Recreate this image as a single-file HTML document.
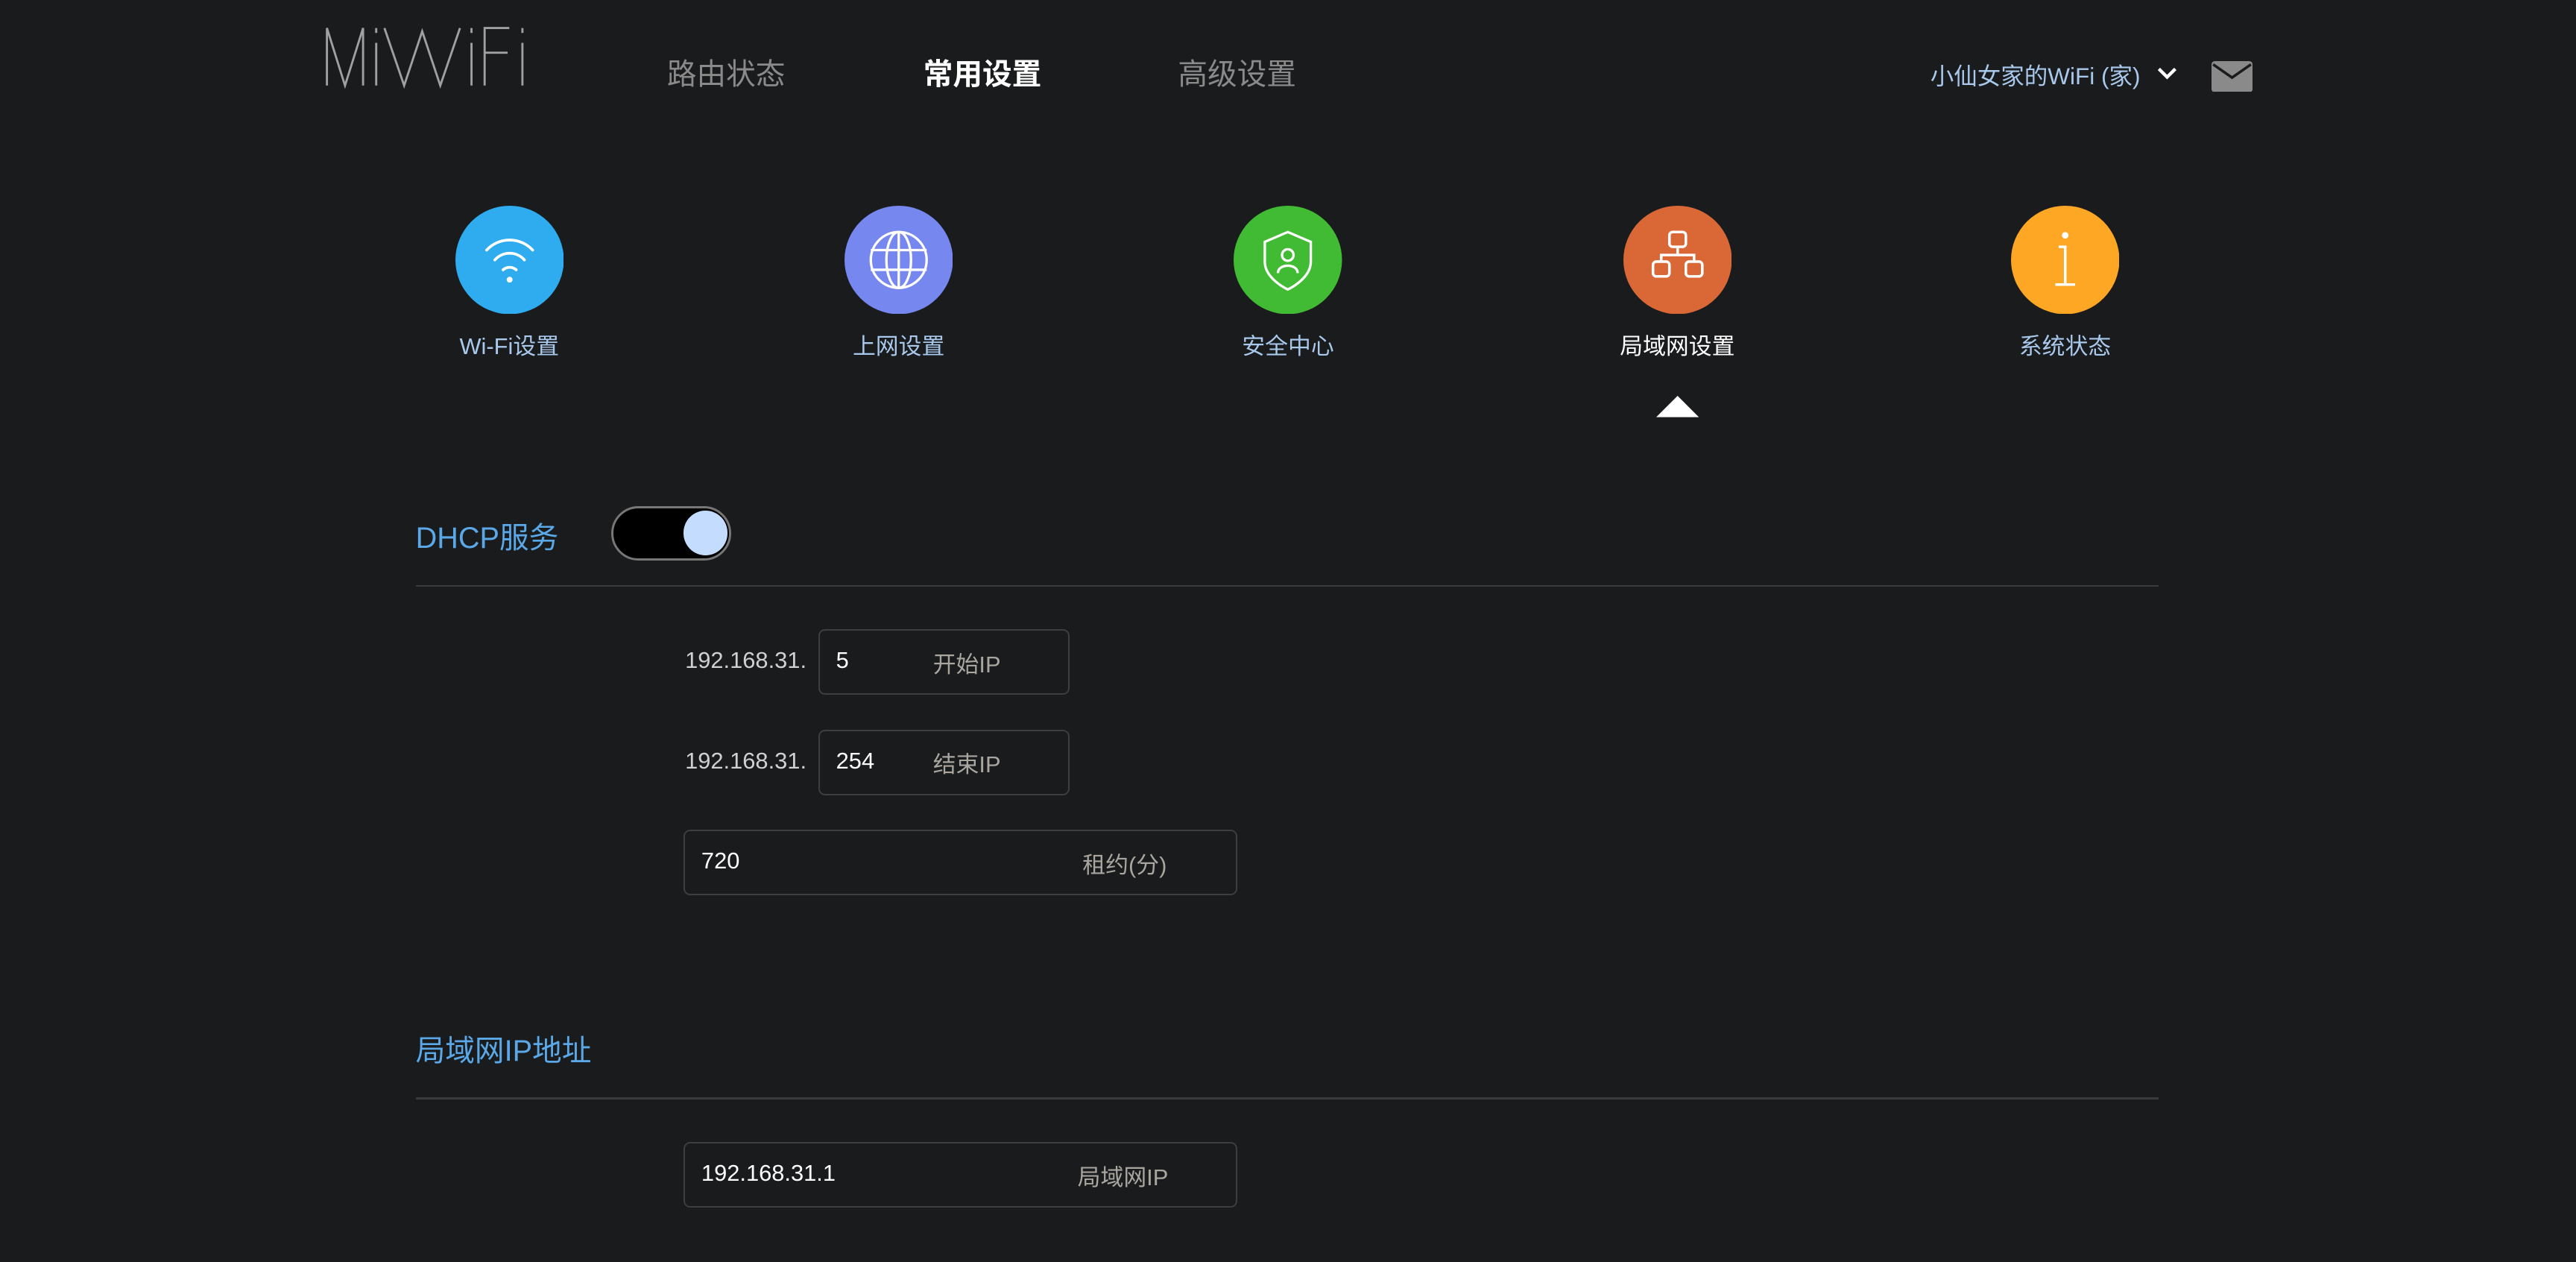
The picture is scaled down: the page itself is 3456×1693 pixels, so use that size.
<!DOCTYPE html>
<html><head><meta charset="utf-8"><style>
html,body{margin:0;padding:0;background:#1a1b1d;overflow:hidden;}
#w{position:relative;width:1568px;height:768px;zoom:2.20408;font-family:"Liberation Sans","Noto Sans CJK SC",sans-serif;}
.a{position:absolute;white-space:nowrap;}
.nav{font-size:18px;top:31px;color:#8a8a8a;}
.lbl{font-size:14px;top:199px;color:#a8c8ec;transform:translateX(-50%);}
.hr{position:absolute;left:253px;width:1061px;height:1px;background:#3a3b3d;}
.inp{position:absolute;border:1px solid #3c3e40;border-radius:4px;box-sizing:border-box;height:40px;}
.v{position:absolute;top:10px;font-size:14px;color:#fff;}
.p{position:absolute;top:9px;font-size:14px;color:#a9a6a0;}
.pre{font-size:14px;color:#d0d0d0;}
.sec{font-size:18px;color:#5aa8e8;}
</style></head><body><div id="w">
<svg class="a" style="left:196px;top:14px" width="130" height="40" viewBox="0 0 130 40" fill="none" stroke="#a0a0a0" stroke-width="1.3">
<polyline points="3,38 3,3 14,38 25,3 25,38"/>
<line x1="33" y1="3" x2="33" y2="6"/><line x1="33" y1="12" x2="33" y2="38"/>
<polyline points="38,3 50,38 61,5 72,38 84,3"/>
<line x1="91" y1="3" x2="91" y2="6"/><line x1="91" y1="12" x2="91" y2="38"/>
<polyline points="114,3 99,3 99,38"/><line x1="99" y1="18" x2="113" y2="18"/>
<line x1="122" y1="3" x2="122" y2="6"/><line x1="122" y1="12" x2="122" y2="38"/>
</svg>
<div class="a nav" style="left:406px">路由状态</div>
<div class="a nav" style="left:562px;color:#fff;font-weight:bold">常用设置</div>
<div class="a nav" style="left:717px">高级设置</div>
<div class="a" style="left:1175px;top:35px;font-size:14.3px;color:#a8c8ec">小仙女家的WiFi (家)</div>
<svg class="a" style="left:1312px;top:40px" width="14" height="10"><polyline points="2,2 7,7 12,2" fill="none" stroke="#fff" stroke-width="2"/></svg>
<svg class="a" style="left:1346px;top:37px" width="25" height="19"><rect x="0" y="0" width="25" height="19" rx="2" fill="#8a8a8a"/><polyline points="1,2 12.5,10 24,2" fill="none" stroke="#1a1b1d" stroke-width="1.6"/></svg>

<svg class="a" style="left:277px;top:125px" width="66" height="66" viewBox="-33 -33 66 66"><circle r="33" fill="#2fabef"/><g fill="none" stroke="#fff" stroke-width="1.7" stroke-linecap="round"><path d="M-14,-6 A19,19 0 0 1 14,-6"/><path d="M-9,0 A12,12 0 0 1 9,0"/><path d="M-4,6 A6,6 0 0 1 4,6"/></g><circle cx="0" cy="12" r="1.8" fill="#fff"/></svg>
<svg class="a" style="left:514px;top:125px" width="66" height="66" viewBox="-33 -33 66 66"><circle r="33" fill="#7787f0"/><g fill="none" stroke="#fff" stroke-width="1.5"><circle r="17"/><ellipse rx="7.5" ry="17"/><line x1="-17" y1="-6" x2="17" y2="-6"/><line x1="-17" y1="6" x2="17" y2="6"/><line x1="0" y1="-17" x2="0" y2="17"/></g></svg>
<svg class="a" style="left:751px;top:125px" width="66" height="66" viewBox="-33 -33 66 66"><circle r="33" fill="#41bb33"/><g fill="none" stroke="#fff" stroke-width="1.5"><path d="M0,-17 L14,-11 V1 C14,9 6,15 0,18 C-6,15 -14,9 -14,1 V-11 Z"/><circle cx="0" cy="-3" r="3.5"/><path d="M-6,8 C-6,2 6,2 6,8"/></g></svg>
<svg class="a" style="left:988px;top:125px" width="66" height="66" viewBox="-33 -33 66 66"><circle r="33" fill="#da6836"/><g fill="none" stroke="#fff" stroke-width="1.6"><rect x="-5" y="-17" width="10" height="9" rx="2"/><path d="M0,-8 V-3 M-10,1 V-3 H10 V1"/><rect x="-15" y="1" width="10" height="9" rx="2"/><rect x="5" y="1" width="10" height="9" rx="2"/></g></svg>
<svg class="a" style="left:1224px;top:125px" width="66" height="66" viewBox="-33 -33 66 66"><circle r="33" fill="#fda725"/><circle cx="0" cy="-15" r="2" fill="#fff"/><path d="M-4,-8 H0 V15 M-6,15 H6" fill="none" stroke="#fff" stroke-width="1.6"/></svg>

<div class="a lbl" style="left:310px">Wi-Fi设置</div>
<div class="a lbl" style="left:547px">上网设置</div>
<div class="a lbl" style="left:784px">安全中心</div>
<div class="a lbl" style="left:1021px;color:#fff">局域网设置</div>
<div class="a lbl" style="left:1257px">系统状态</div>
<svg class="a" style="left:1008px;top:241px" width="26" height="13"><polygon points="13,0 26,13 0,13" fill="#fff"/></svg>

<div class="a sec" style="left:253px;top:313px">DHCP服务</div>
<div class="a" style="left:372px;top:308px;width:73px;height:33px;box-sizing:border-box;border:1.5px solid #777;border-radius:17px;background:#000"></div>
<div class="a" style="left:416px;top:311px;width:27px;height:27px;border-radius:50%;background:#c4dcfe"></div>
<div class="hr" style="top:356px"></div>

<div class="a pre" style="left:417px;top:394px">192.168.31.</div>
<div class="inp" style="left:498px;top:383px;width:153px"><span class="v" style="left:10px">5</span><span class="p" style="left:69px">开始IP</span></div>
<div class="a pre" style="left:417px;top:455px">192.168.31.</div>
<div class="inp" style="left:498px;top:444px;width:153px"><span class="v" style="left:10px">254</span><span class="p" style="left:69px">结束IP</span></div>
<div class="inp" style="left:416px;top:505px;width:337px"><span class="v" style="left:10px">720</span><span class="p" style="left:242px">租约(分)</span></div>

<div class="a sec" style="left:253px;top:625px">局域网IP地址</div>
<div class="hr" style="top:668px"></div>
<div class="inp" style="left:416px;top:695px;width:337px"><span class="v" style="left:10px">192.168.31.1</span><span class="p" style="left:239px">局域网IP</span></div>
</div></body></html>
